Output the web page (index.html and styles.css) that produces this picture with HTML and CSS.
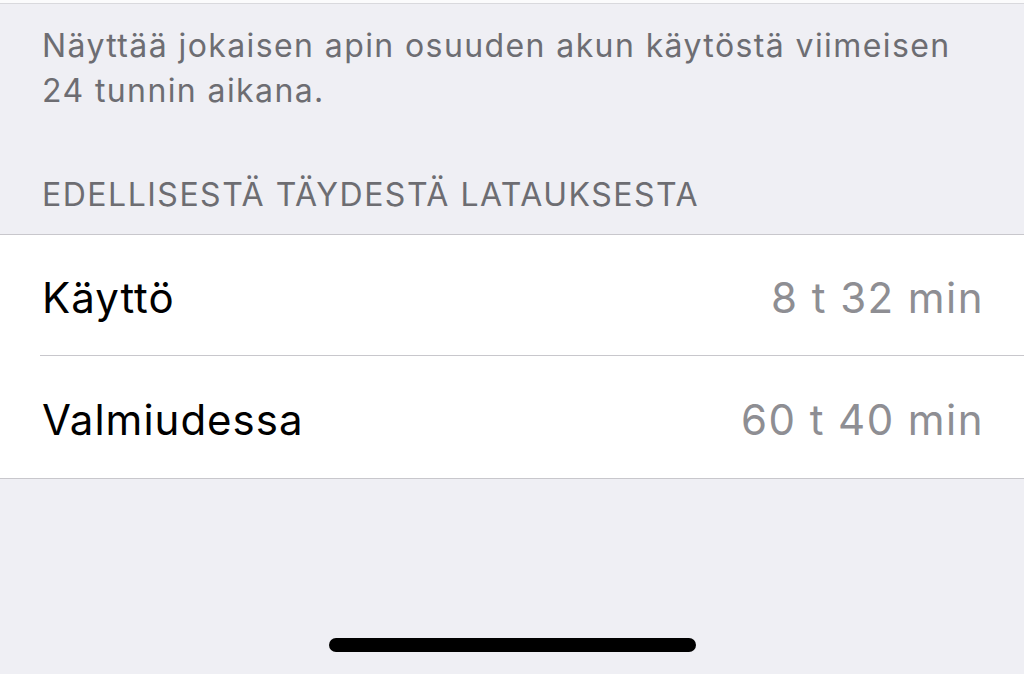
FILE: index.html
```html
<!DOCTYPE html>
<html lang="fi">
<head>
<meta charset="utf-8">
<link rel="stylesheet" href="styles.css">
</head>
<body>
<div class="screen">
  <div class="top-strip"></div>
  <p class="footer-note">Näyttää jokaisen apin osuuden akun käytöstä viimeisen 24 tunnin aikana.</p>
  <h2 class="section-header">EDELLISESTÄ TÄYDESTÄ LATAUKSESTA</h2>
  <div class="group">
    <div class="row">
      <span class="label">Käyttö</span>
      <span class="value">8 t 32 min</span>
    </div>
    <div class="row">
      <span class="label">Valmiudessa</span>
      <span class="value">60 t 40 min</span>
    </div>
  </div>
  <div class="spacer"></div>
  <div class="home-bar-wrap"><div class="home-bar"></div></div>
</div>
</body>
</html>
```

FILE: styles.css
```css
html, body {
  margin: 0;
  padding: 0;
}
body {
  background: #efeff4;
  font-family: Inter, "Liberation Sans", Arial, sans-serif;
  -webkit-font-smoothing: antialiased;
}
.screen {
  width: 1024px;
  height: 674px;
  display: flex;
  flex-direction: column;
  overflow: hidden;
}
.top-strip {
  height: 3px;
  background: #fbfbfc;
  border-bottom: 1px solid #d9d9dd;
  flex: none;
}
.footer-note {
  margin: 19px 0 0 0;
  padding: 0 40px 0 42px;
  font-size: 32px;
  line-height: 45px;
  letter-spacing: 1.4px;
  color: #6d6d72;
}
.section-header {
  margin: 59px 0 0 0;
  padding: 0 0 17px 42px;
  font-size: 32px;
  line-height: 45px;
  letter-spacing: 1.5px;
  font-weight: normal;
  color: #6d6d72;
  border-bottom: 1px solid #c8c7cc;
}
.group {
  background: #ffffff;
  border-bottom: 1px solid #c8c7cc;
  padding-left: 40px;
}
.row {
  height: 120px;
  display: flex;
  align-items: center;
  justify-content: space-between;
  padding-right: 40px;
  padding-left: 2px;
}
.row + .row {
  height: 122px;
  border-top: 1px solid #c8c7cc;
}
.label {
  font-size: 42px;
  letter-spacing: 1px;
  color: #000000;
  padding-top: 5px;
}
.value {
  font-size: 42px;
  letter-spacing: 1.45px;
  color: #8e8e93;
  padding-top: 5px;
}
.spacer {
  flex: 1;
}
.home-bar-wrap {
  display: flex;
  justify-content: center;
  padding-bottom: 22px;
}
.home-bar {
  width: 367px;
  height: 14px;
  border-radius: 7px;
  background: #000000;
}
```
